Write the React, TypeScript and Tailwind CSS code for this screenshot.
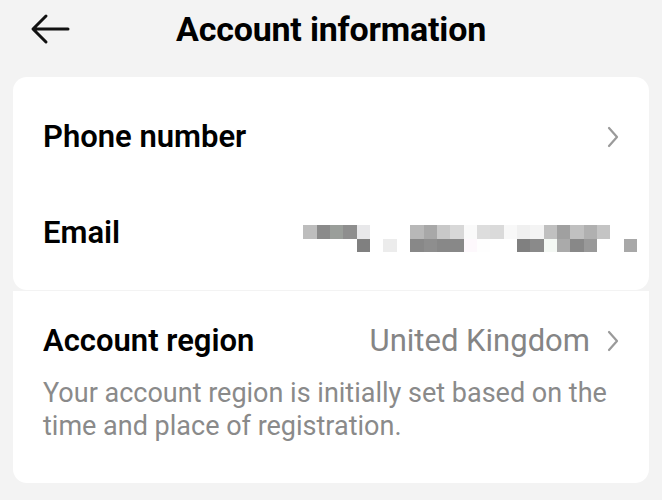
import React from 'react';

const font = { fontFamily: 'Roboto, "Liberation Sans", sans-serif' };

// pixelated email placeholder, two rows of blocks
const ROW1 = ['#bdbdbd', '#8a8a8a', '#9a9e9a', '#8e8e8e', '#e8e8ea', '#fff', '#fff', '#fff', '#b8b8b8', '#a8a8a8', '#c8c8c8', '#d8d8d8', '#fafafa', '#dddddd', '#dadada', '#f8f8f8', '#f0f0f0', '#f4f4f4', '#c0c0c0', '#a0a0a0', '#c0c0c0', '#b0b0b0', '#c4c4c4', '#fff', '#fff'];
const ROW2 = ['#fff', '#fff', '#fff', '#fff', '#808080', '#fff', '#ececec', '#fff', '#888888', '#8e8e8e', '#888888', '#888888', '#fdf8fc', '#fefefe', '#fff', '#fff', '#808080', '#8a8a8a', '#f4f8f4', '#aaaaaa', '#888888', '#999999', '#fff', '#fff', '#a8a8a8'];

function Chevron() {
  return (
    <svg width="14" height="24" viewBox="0 0 14 24" fill="none" className="shrink-0">
      <path d="M3 3 L11 12 L3 21" stroke="#9a9a9a" strokeWidth="2.2" strokeLinecap="round" strokeLinejoin="round" />
    </svg>
  );
}

function Pixels() {
  return (
    <div className="flex flex-col">
      {[ROW1, ROW2].map((row, r) => (
        <div key={r} className="flex">
          {row.map((c, i) => (
            <div key={i} className="h-[13.5px] w-[13.35px]" style={{ backgroundColor: c }} />
          ))}
        </div>
      ))}
    </div>
  );
}

export default function App() {
  return (
    <div className="h-[500px] w-[662px] overflow-hidden bg-[#f3f3f3] text-black" style={font}>
      {/* Header */}
      <div className="relative flex h-[58px] items-center justify-center">
        <svg width="40" height="32" viewBox="0 0 40 32" fill="none" className="absolute left-[30px] top-[13px]">
          <path d="M38 16 H4 M16 3 L3 16 L16 29" stroke="#111" strokeWidth="3" strokeLinecap="round" strokeLinejoin="round" />
        </svg>
        <h1 className="text-[34px] font-bold tracking-[-0.2px]">Account information</h1>
      </div>

      {/* Card 1 */}
      <div className="mx-[13px] mt-[19px] rounded-[14px] bg-white pt-[12px] pb-[9px]">
        <div className="flex h-[96px] items-center justify-between pl-[30px] pr-[29px]">
          <span className="text-[31px] font-semibold">Phone number</span>
          <Chevron />
        </div>
        <div className="flex h-[96px] items-center justify-between pl-[30px] pr-[12px]">
          <span className="text-[31px] font-semibold">Email</span>
          <div className="pt-[11px]">
            <Pixels />
          </div>
        </div>
      </div>

      {/* Card 2 */}
      <div className="mx-[13px] mt-[1px] rounded-b-[14px] bg-white pl-[30px] pr-[29px] pt-[28px] pb-[40px]">
        <div className="flex h-[44px] items-center justify-between">
          <span className="text-[31px] font-semibold">Account region</span>
          <div className="flex items-center gap-[16px]">
            <span className="text-[31px] text-[#858585]">United Kingdom</span>
            <Chevron />
          </div>
        </div>
        <p className="mt-[14px] text-[27px] leading-[33px] text-[#8a8a8a]">
          Your account region is initially set based on the time and place of registration.
        </p>
      </div>
    </div>
  );
}
